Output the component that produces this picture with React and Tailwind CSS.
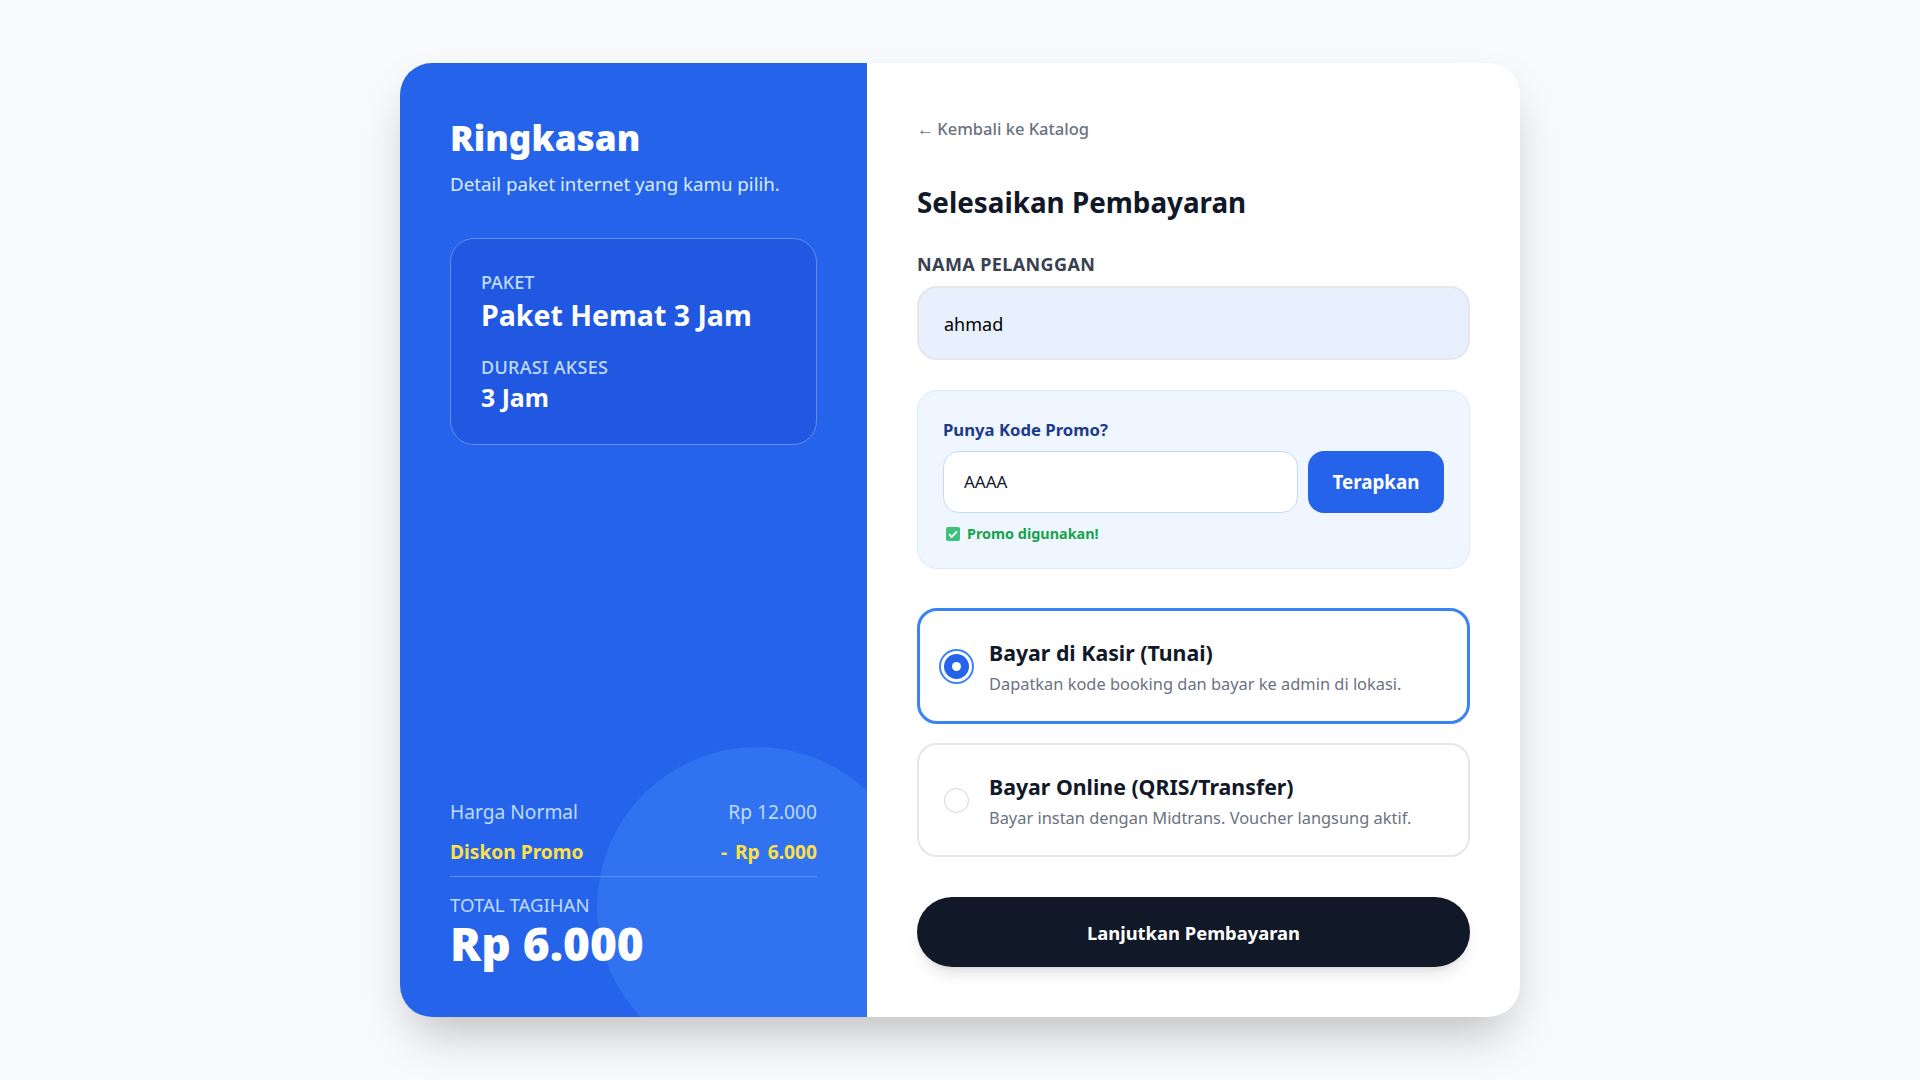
const PayOption = ({ title, desc, selected }) => (
  <label
    className={`flex items-center gap-5 rounded-[20px] bg-white ${
      selected ? 'h-[116px] border-[3px] border-[#3b82f6] px-[24px]' : 'h-[114px] border-2 border-gray-200 px-[25px]'
    }`}
  >
    {selected ? (
      <span className="flex h-[25px] w-[25px] shrink-0 items-center justify-center rounded-full bg-[#2563eb] shadow-[0_0_0_3px_#ffffff,0_0_0_5px_#3b82f6]">
        <span className="h-[9px] w-[9px] rounded-full bg-white" />
      </span>
    ) : (
      <span className="h-[25px] w-[25px] shrink-0 rounded-full border border-gray-300 bg-white" />
    )}
    <span className="block pt-[1px]">
      <span className="block text-[21.3px] leading-[32px] font-bold text-[#111827]">{title}</span>
      <span className="mt-[2px] block text-[16.4px] leading-[26px] text-[#6b7280]">{desc}</span>
    </span>
  </label>
)

const App = () => {
  return (
    <div className="flex min-h-screen items-center justify-center bg-[#f9fafb] font-['Noto_Sans',sans-serif]">
      <div className="flex w-[1120px] overflow-hidden rounded-[32px] bg-white shadow-2xl">
        {/* Left summary */}
        <div className="relative flex w-[467px] shrink-0 flex-col justify-between overflow-hidden bg-[#2563eb] p-[50px] text-white">
          <div className="relative">
            <h2 className="mt-[-3px] text-[35.2px] leading-[54px] font-black">Ringkasan</h2>
            <p className="mt-[6px] text-[18.7px] leading-[27px] text-[#dbeafe]">Detail paket internet yang kamu pilih.</p>
            <div className="mt-[41px] h-[207px] rounded-[24px] border border-[#5f8ff0] bg-[#1d4ed8]/50 px-[30px] pt-[31px]">
              <div className="text-[18px] leading-[24px] font-medium text-[#bfdbfe] uppercase">Paket</div>
              <div className="text-[28.5px] leading-[42px] font-bold">Paket Hemat 3 Jam</div>
              <div className="mt-[19px] text-[18px] leading-[24px] font-medium tracking-[0.3px] text-[#bfdbfe] uppercase">Durasi Akses</div>
              <div className="text-[24.8px] leading-[36px] font-bold">3 Jam</div>
            </div>
          </div>

          <div className="relative z-10 mb-[-2px]">
            <div className="flex justify-between text-[19.2px] leading-[27px] text-[#bfdbfe]">
              <span>Harga Normal</span>
              <span>Rp 12.000</span>
            </div>
            <div className="mt-[13px] flex justify-between text-[19.2px] leading-[27px] font-bold text-[#fde047]">
              <span>Diskon Promo</span>
              <span className="[word-spacing:3px]">- Rp 6.000</span>
            </div>
            <div className="mt-[11px] border-t border-[#5f8ff0] pt-[16px]">
              <div className="text-[18.6px] leading-[24px] text-[#bfdbfe] uppercase">Total Tagihan</div>
              <div className="text-[46px] leading-[52px] font-black">Rp 6.000</div>
            </div>
          </div>

          <div className="absolute right-[-50px] bottom-[-50px] h-[320px] w-[320px] rounded-full bg-[#3b82f6]/50" />
        </div>

        {/* Right form */}
        <div className="flex-1 p-[50px]">
          <a className="mt-[4px] block h-[24px] text-[16.5px] leading-[24px] font-medium text-[#6b7280]">
            <span className="mr-[-1px] font-['Liberation_Sans',sans-serif] text-[17px]">←</span> Kembali ke Katalog
          </a>
          <h1 className="mt-[39px] text-[27.8px] leading-[45px] font-bold text-[#111827]">Selesaikan Pembayaran</h1>

          <label className="mt-[27px] block text-[18px] leading-[24px] font-bold tracking-[0.4px] text-[#374151] uppercase">
            Nama Pelanggan
          </label>
          <input
            readOnly
            value="ahmad"
            className="mt-[10px] block h-[74px] w-full rounded-[20px] border-2 border-gray-200 bg-[#e8f0fe] px-[25px] pt-[2px] text-[18px] text-black outline-none"
          />

          <div className="mt-[30px] h-[179px] rounded-[20px] border border-[#dbeafe] bg-[#eff6ff] px-[25px] pt-[27px]">
            <div className="text-[16.7px] leading-[24px] font-bold text-[#1e3a8a]">Punya Kode Promo?</div>
            <div className="mt-[9px] flex gap-[10px]">
              <input
                readOnly
                value="AAAA"
                className="h-[62px] min-w-0 flex-1 rounded-[16px] border border-[#bfdbfe] bg-white px-[20px] pb-[2px] text-[17px] text-[#111827] outline-none"
              />
              <button className="h-[62px] w-[136px] rounded-[16px] bg-[#2563eb] text-[18.8px] font-bold text-white">Terapkan</button>
            </div>
            <div className="mt-[10px] flex items-center gap-[6px] pl-[2px] text-[14.4px] leading-[21px] font-bold text-[#16a34a]">
              <svg viewBox="0 0 16 16" className="h-[16px] w-[16px] shrink-0">
                <rect x="1" y="1" width="14" height="14" rx="2" fill="#3fbf7a" />
                <path d="M4 8.2l2.7 2.7L12 5.4" fill="none" stroke="#ffffff" strokeWidth="1.8" />
              </svg>
              Promo digunakan!
            </div>
          </div>

          <div className="mt-[39px] flex flex-col gap-[19px]">
            <PayOption selected title="Bayar di Kasir (Tunai)" desc="Dapatkan kode booking dan bayar ke admin di lokasi." />
            <PayOption title="Bayar Online (QRIS/Transfer)" desc="Bayar instan dengan Midtrans. Voucher langsung aktif." />
          </div>

          <button className="mt-[40px] block h-[70px] w-full rounded-full bg-[#111827] pt-[1px] text-[18.4px] font-bold text-white shadow-lg">
            Lanjutkan Pembayaran
          </button>
        </div>
      </div>
    </div>
  )
}

export default App
